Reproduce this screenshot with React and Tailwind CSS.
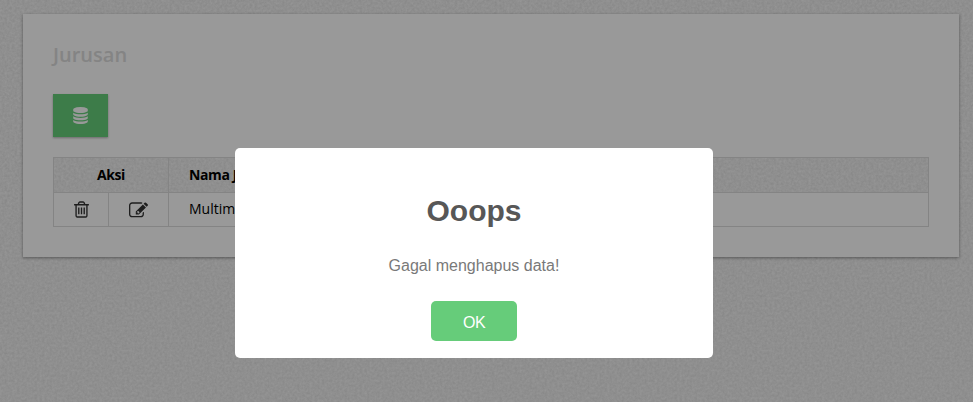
import React from "react";

const icons = {
  database:
    "M896 768q237 0 443-43t325-127v170q0 69-103 128t-280 93.5-385 34.5-385-34.5-280-93.5-103-128v-170q119 84 325 127t443 43zm0 768q237 0 443-43t325-127v170q0 69-103 128t-280 93.5-385 34.5-385-34.5-280-93.5-103-128v-170q119 84 325 127t443 43zm0-384q237 0 443-43t325-127v170q0 69-103 128t-280 93.5-385 34.5-385-34.5-280-93.5-103-128v-170q119 84 325 127t443 43zm0-1152q208 0 385 34.5t280 93.5 103 128v128q0 69-103 128t-280 93.5-385 34.5-385-34.5-280-93.5-103-128v-128q0-69 103-128t280-93.5 385-34.5z",
  trash:
    "M704 736v576q0 14-9 23t-23 9h-64q-14 0-23-9t-9-23v-576q0-14 9-23t23-9h64q14 0 23 9t9 23zm256 0v576q0 14-9 23t-23 9h-64q-14 0-23-9t-9-23v-576q0-14 9-23t23-9h64q14 0 23 9t9 23zm256 0v576q0 14-9 23t-23 9h-64q-14 0-23-9t-9-23v-576q0-14 9-23t23-9h64q14 0 23 9t9 23zm128 724v-948h-896v948q0 22 7 40.5t14.5 27 10.5 8.5h832q3 0 10.5-8.5t14.5-27 7-40.5zm-672-1076h448l-48-117q-7-9-17-11h-317q-10 2-17 11zm928 32v64q0 14-9 23t-23 9h-96v948q0 83-47 143.5t-113 60.5h-832q-66 0-113-58.5t-47-141.5v-952h-96q-14 0-23-9t-9-23v-64q0-14 9-23t23-9h309l70-167q15-37 54-63t79-26h320q40 0 79 26t54 63l70 167h309q14 0 23 9t9 23z",
  edit:
    "M888 1184l116-116-152-152-116 116v56h96v96h56zm520-126v190q0 119-84.5 203.5t-203.5 84.5h-832q-119 0-203.5-84.5t-84.5-203.5v-832q0-119 84.5-203.5t203.5-84.5h832q63 0 117 25 15 7 18 23 3 17-9 29l-49 49q-14 14-32 8-23-6-45-6h-832q-66 0-113 47t-47 113v832q0 66 47 113t113 47h832q66 0 113-47t47-113v-126q0-13 9-22l64-64q15-15 35-7t20 29zm-96-738l288 288-672 672h-288v-288zm444 132l-92 92-288-288 92-92q28-28 68-28t68 28l152 152q28 28 28 68t-28 68z",
};

function Icon({ name, className }) {
  return (
    <svg viewBox="0 0 1792 1792" fill="currentColor" className={className}>
      <path d={icons[name]} />
    </svg>
  );
}

// Fine paper grain shared by the page background and the table header.
function Grain({ id }) {
  return (
    <svg className="absolute inset-0 h-full w-full" aria-hidden="true">
      <filter id={id} x="0" y="0" width="100%" height="100%" colorInterpolationFilters="sRGB">
        <feTurbulence type="fractalNoise" baseFrequency="0.4" numOctaves="3" seed="4" />
        <feColorMatrix values="0 0 0 0 0  0 0 0 0 0  0 0 0 0 0  0.12 0 0 0 -0.02" />
      </filter>
      <rect width="100%" height="100%" filter={`url(#${id})`} />
    </svg>
  );
}

function Modal() {
  return (
    <div className="absolute inset-0 flex items-start justify-center bg-black/40 pr-[25px] pt-[148px]">
      <div className="flex h-[210px] w-[478px] flex-col items-center rounded-[5px] bg-white font-['Liberation_Sans',Arial,sans-serif]">
        <h2 className="mt-[43px] text-[30px] font-semibold leading-10 text-[#575757]">Ooops</h2>
        <p className="mt-[23px] text-base leading-6 text-[#797979]">Gagal menghapus data!</p>
        <button className="mt-[23px] h-10 w-[86px] rounded-[5px] bg-[#66cc7a] pt-1 text-base leading-none tracking-[-0.5px] text-white">
          OK
        </button>
      </div>
    </div>
  );
}

export default function App() {
  return (
    <div className="relative h-[402px] w-[973px] overflow-hidden bg-[#f8f8f8] font-['Open_Sans',sans-serif]">
      <Grain id="page-grain" />
      <main className="relative ml-[23px] mt-3.5 h-[243px] w-[936px] bg-white px-[30px] pt-[27px] shadow-[0_1px_3px_rgba(0,0,0,0.4)]">
        <h1 className="text-xl font-semibold leading-[27px] text-[#dcdcdc]">Jurusan</h1>
        <button className="mt-[26px] flex h-[43px] w-[55px] items-center justify-center bg-[#66cf7b] pb-px text-white shadow-[0_1px_2px_rgba(0,0,0,0.3)]">
          <Icon name="database" className="h-[17px] w-[17px]" />
        </button>
        <div className="mt-5 h-[70px] w-[876px] border border-[#dddddd] text-sm text-black">
          <div className="relative flex h-[35px] border-b border-[#dddddd] bg-[#f8f8f8] font-bold">
            <Grain id="header-grain" />
            <div className="relative flex w-[115px] items-center justify-center border-r border-[#dddddd] tracking-[-0.4px]">
              Aksi
            </div>
            <div className="relative flex items-center pl-5 tracking-[-0.4px]">Nama Jurusan</div>
          </div>
          <div className="flex h-[33px]">
            <div className="flex w-[55px] items-center justify-center border-r border-[#dddddd] text-[#333]">
              <Icon name="trash" className="h-[19px] w-[19px]" />
            </div>
            <div className="flex w-[60px] items-center justify-center border-r border-[#dddddd] pt-0.5 text-[#333]">
              <Icon name="edit" className="h-[19px] w-[19px]" />
            </div>
            <div className="flex items-center pb-0.5 pl-5">Multimedia</div>
          </div>
        </div>
      </main>
      <Modal />
    </div>
  );
}
